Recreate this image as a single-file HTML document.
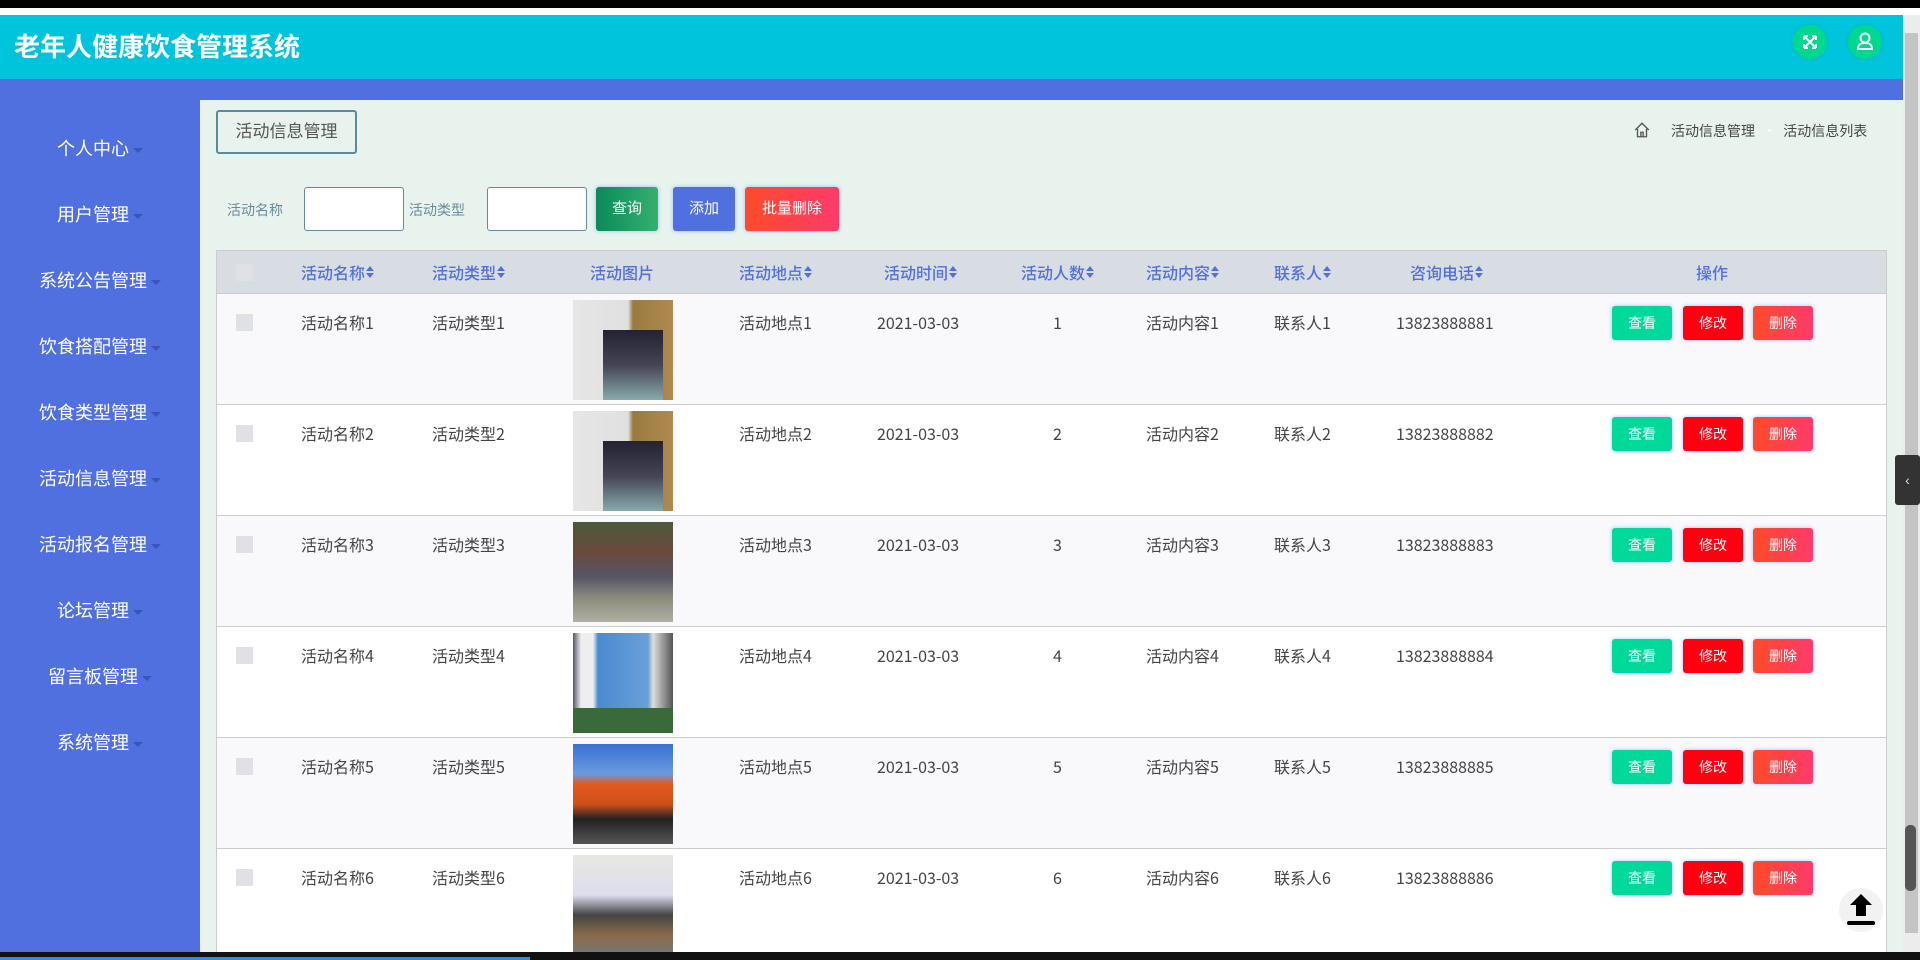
<!DOCTYPE html>
<html><head><meta charset="utf-8"><style>
*{box-sizing:border-box;margin:0;padding:0}
body{width:1920px;height:960px;overflow:hidden;position:relative;background:#e8f3ee;font-family:"Liberation Sans","Noto Sans CJK SC",sans-serif}
.abs{position:absolute}
.top{left:0;top:0;width:1920px;height:8px;background:#000}
.white{left:0;top:8px;width:1920px;height:7px;background:#fff}
.hdr{left:0;top:15px;width:1903px;height:64px;background:#00c4dc}
.hdr h1{position:absolute;left:14px;top:13px;font-size:26px;color:#fff;font-weight:bold;font-family:"Noto Sans CJK SC",sans-serif;line-height:36px}
.circ{position:absolute;width:34px;height:34px;border-radius:50%;background:#00d890;top:10px;box-shadow:0 0 4px rgba(0,0,0,.1)}
.bar{left:0;top:79px;width:1903px;height:21px;background:#5070e0}
.side{left:0;top:100px;width:200px;height:852px;background:#5070e0}
.side div{position:absolute;width:200px;text-align:center;color:#fff;font-size:18px;line-height:24px}
.side div:after{content:"";display:inline-block;margin-left:4px;vertical-align:middle;border-left:5px solid transparent;border-right:5px solid transparent;border-top:5px solid #3a55b8}
.sb{left:1903px;top:15px;width:17px;height:937px;background:#ececec}
.tbox{left:216px;top:110px;width:141px;height:44px;border:2px solid #5a8aa0;border-radius:3px;font-size:17px;color:#555;text-align:center;line-height:40px}
.bc{top:121px;font-size:14px;color:#444;font-family:"Noto Sans CJK SC",sans-serif;line-height:20px}
.lbl{top:200px;font-size:14px;color:#6a8a9a}
.inp{top:187px;width:100px;height:44px;background:#fff;border:1px solid #6a8a9a;border-radius:3px}
.btn{top:187px;height:44px;color:#fff;font-size:15px;text-align:center;line-height:44px;border-radius:3px;box-shadow:0 0 4px rgba(80,140,255,.5)}
.tbl{left:216px;top:250px;width:1671px;height:702px;background:#fff;border-left:1px solid #ccc;border-right:1px solid #ccc}
.th{position:absolute;left:0;top:0;width:100%;height:44px;background:#d8dde3;border-top:1px solid #ccc;border-bottom:1px solid #ccc}
.c{position:absolute;font-size:16px;color:#444;white-space:nowrap;font-family:"Noto Sans CJK SC",sans-serif;line-height:22px}
.th .c{color:#5070e0;top:10px;font-size:16px;font-weight:500}
.row{position:absolute;left:0;width:100%;height:111px;border-bottom:1px solid #ccc}
.row .c{top:17px}
.chk{position:absolute;left:19px;width:17px;height:17px;background:#dfe1e7}
.img{position:absolute;left:356px;top:6px;width:100px;height:100px}
.b{position:absolute;top:12px;height:34px;width:60px;color:#fff;font-size:14px;text-align:center;line-height:34px;border-radius:3px;box-shadow:0 0 4px rgba(80,140,255,.5)}
.ar{padding-right:9px}
.ar i{position:absolute;right:0;top:5px;width:0;height:0;border-left:4px solid transparent;border-right:4px solid transparent;border-bottom:5px solid #5070e0}
.ar b{position:absolute;right:0;top:12px;width:0;height:0;border-left:4px solid transparent;border-right:4px solid transparent;border-top:5px solid #5070e0}
</style></head><body>
<div class="abs top"></div><div class="abs white"></div>
<div class="abs hdr"><h1>老年人健康饮食管理系统</h1>
<div class="circ" style="left:1793px"><svg width="34" height="34" viewBox="0 0 34 34" stroke="#fff" stroke-width="2" fill="none"><path d="M11 11l12 12M23 11L11 23M11 11h4M11 11v4M23 11h-4M23 11v4M11 23h4M11 23v-4M23 23h-4M23 23v-4"/></svg></div>
<div class="circ" style="left:1848px"><svg width="34" height="34" viewBox="0 0 34 34" stroke="#fff" stroke-width="2" fill="none"><circle cx="17" cy="13" r="4.5"/><path d="M10 24c0-5 3-6 7-6s7 1 7 6z"/></svg></div>
</div>
<div class="abs bar"></div>
<div class="abs sb"><div style="position:absolute;left:2px;top:18px;width:13px;height:900px;background:#c4c4c4"></div><div style="position:absolute;left:2px;top:810px;width:11px;height:66px;background:#555;border-radius:5px"></div></div>
<div class="abs" style="left:1895px;top:455px;width:25px;height:50px;background:#333;border-radius:3px;color:#ddd;font-size:14px;text-align:center;line-height:50px">‹</div>
<div class="abs side">
<div style="top:37px">个人中心</div><div style="top:103px">用户管理</div><div style="top:169px">系统公告管理</div><div style="top:235px">饮食搭配管理</div><div style="top:301px">饮食类型管理</div><div style="top:367px">活动信息管理</div><div style="top:433px">活动报名管理</div><div style="top:499px">论坛管理</div><div style="top:565px">留言板管理</div><div style="top:631px">系统管理</div>
</div>
<div class="abs tbox">活动信息管理</div>
<div class="abs bc" style="left:1633px;top:121px"><svg width="18" height="18" viewBox="0 0 16 16" fill="none" stroke="#555" stroke-width="1.2"><path d="M2 8L8 2l6 6M4 7v7h8V7M7 14v-4h2v4"/></svg></div>
<div class="abs bc" style="left:1671px">活动信息管理 <span style="color:#fff;margin:0 4px">•</span> 活动信息列表</div>
<div class="abs lbl" style="left:227px">活动名称</div>
<div class="abs inp" style="left:304px"></div>
<div class="abs lbl" style="left:409px">活动类型</div>
<div class="abs inp" style="left:487px"></div>
<div class="abs btn" style="left:596px;width:62px;background:linear-gradient(90deg,#0b8a5a,#35b070)">查询</div>
<div class="abs btn" style="left:673px;width:62px;background:#5070e0">添加</div>
<div class="abs btn" style="left:745px;width:94px;background:linear-gradient(90deg,#ff4a2a,#ff3a6a)">批量删除</div>
<div class="abs tbl">
<div class="th"><div class="chk" style="top:13px"></div>
<div class="c ar" style="left:84px">活动名称<i></i><b></b></div><div class="c ar" style="left:215px">活动类型<i></i><b></b></div><div class="c" style="left:373px">活动图片</div><div class="c ar" style="left:522px">活动地点<i></i><b></b></div><div class="c ar" style="left:667px">活动时间<i></i><b></b></div><div class="c ar" style="left:804px">活动人数<i></i><b></b></div><div class="c ar" style="left:929px">活动内容<i></i><b></b></div><div class="c ar" style="left:1057px">联系人<i></i><b></b></div><div class="c ar" style="left:1193px">咨询电话<i></i><b></b></div><div class="c" style="left:1479px">操作</div></div>
<div class="row" style="top:44px;background:#f9f9fb"><div class="chk" style="top:20px"></div><div class="c" style="left:84px">活动名称1</div><div class="c" style="left:215px">活动类型1</div><div class="img" style="background:linear-gradient(90deg,#e6e6e6 0,#e0e0e0 55%,#9a7a40 60%,#b08a50 100%)"><div style="position:absolute;left:30px;top:30px;width:60px;height:70px;background:linear-gradient(#223 0,#445 50%,#8aa 100%)"></div></div><div class="c" style="left:522px">活动地点1</div><div class="c" style="left:660px">2021-03-03</div><div class="c" style="left:836px">1</div><div class="c" style="left:929px">活动内容1</div><div class="c" style="left:1057px">联系人1</div><div class="c" style="left:1179px">13823888881</div>
<div class="b" style="left:1395px;background:#00d99a">查看</div><div class="b" style="left:1466px;background:#ff0010">修改</div><div class="b" style="left:1536px;background:linear-gradient(90deg,#ff4a2a,#ff3a6a)">删除</div></div>
<div class="row" style="top:155px;background:#fff"><div class="chk" style="top:20px"></div><div class="c" style="left:84px">活动名称2</div><div class="c" style="left:215px">活动类型2</div><div class="img" style="background:linear-gradient(90deg,#e6e6e6 0,#e0e0e0 55%,#9a7a40 60%,#b08a50 100%)"><div style="position:absolute;left:30px;top:30px;width:60px;height:70px;background:linear-gradient(#223 0,#445 50%,#8aa 100%)"></div></div><div class="c" style="left:522px">活动地点2</div><div class="c" style="left:660px">2021-03-03</div><div class="c" style="left:836px">2</div><div class="c" style="left:929px">活动内容2</div><div class="c" style="left:1057px">联系人2</div><div class="c" style="left:1179px">13823888882</div>
<div class="b" style="left:1395px;background:#00d99a">查看</div><div class="b" style="left:1466px;background:#ff0010">修改</div><div class="b" style="left:1536px;background:linear-gradient(90deg,#ff4a2a,#ff3a6a)">删除</div></div>
<div class="row" style="top:266px;background:#f9f9fb"><div class="chk" style="top:20px"></div><div class="c" style="left:84px">活动名称3</div><div class="c" style="left:215px">活动类型3</div><div class="img" style="background:linear-gradient(#4a5a3a 0,#6a4a3a 30%,#556 55%,#8a8a7a 75%,#b0b0a0 100%)"></div><div class="c" style="left:522px">活动地点3</div><div class="c" style="left:660px">2021-03-03</div><div class="c" style="left:836px">3</div><div class="c" style="left:929px">活动内容3</div><div class="c" style="left:1057px">联系人3</div><div class="c" style="left:1179px">13823888883</div>
<div class="b" style="left:1395px;background:#00d99a">查看</div><div class="b" style="left:1466px;background:#ff0010">修改</div><div class="b" style="left:1536px;background:linear-gradient(90deg,#ff4a2a,#ff3a6a)">删除</div></div>
<div class="row" style="top:377px;background:#fff"><div class="chk" style="top:20px"></div><div class="c" style="left:84px">活动名称4</div><div class="c" style="left:215px">活动类型4</div><div class="img" style="background:linear-gradient(90deg,#556 0,#eee 8%,#eee 20%,#4a8ad0 25%,#6aa0d8 75%,#ddd 80%,#555 100%)"><div style="position:absolute;left:0;top:75px;width:100px;height:25px;background:#3a6a3a"></div></div><div class="c" style="left:522px">活动地点4</div><div class="c" style="left:660px">2021-03-03</div><div class="c" style="left:836px">4</div><div class="c" style="left:929px">活动内容4</div><div class="c" style="left:1057px">联系人4</div><div class="c" style="left:1179px">13823888884</div>
<div class="b" style="left:1395px;background:#00d99a">查看</div><div class="b" style="left:1466px;background:#ff0010">修改</div><div class="b" style="left:1536px;background:linear-gradient(90deg,#ff4a2a,#ff3a6a)">删除</div></div>
<div class="row" style="top:488px;background:#f9f9fb"><div class="chk" style="top:20px"></div><div class="c" style="left:84px">活动名称5</div><div class="c" style="left:215px">活动类型5</div><div class="img" style="background:linear-gradient(#3a70d0 0,#6a9ae0 30%,#e05a20 40%,#d0501a 60%,#222 75%,#555 100%)"></div><div class="c" style="left:522px">活动地点5</div><div class="c" style="left:660px">2021-03-03</div><div class="c" style="left:836px">5</div><div class="c" style="left:929px">活动内容5</div><div class="c" style="left:1057px">联系人5</div><div class="c" style="left:1179px">13823888885</div>
<div class="b" style="left:1395px;background:#00d99a">查看</div><div class="b" style="left:1466px;background:#ff0010">修改</div><div class="b" style="left:1536px;background:linear-gradient(90deg,#ff4a2a,#ff3a6a)">删除</div></div>
<div class="row" style="top:599px;background:#fff"><div class="chk" style="top:20px"></div><div class="c" style="left:84px">活动名称6</div><div class="c" style="left:215px">活动类型6</div><div class="img" style="background:linear-gradient(#e8e8e0 0,#dde 40%,#444 60%,#8a6a4a 80%,#777 100%)"></div><div class="c" style="left:522px">活动地点6</div><div class="c" style="left:660px">2021-03-03</div><div class="c" style="left:836px">6</div><div class="c" style="left:929px">活动内容6</div><div class="c" style="left:1057px">联系人6</div><div class="c" style="left:1179px">13823888886</div>
<div class="b" style="left:1395px;background:#00d99a">查看</div><div class="b" style="left:1466px;background:#ff0010">修改</div><div class="b" style="left:1536px;background:linear-gradient(90deg,#ff4a2a,#ff3a6a)">删除</div></div>
</div>
<div class="abs" style="left:1839px;top:888px;width:44px;height:44px;border-radius:50%;background:#f2f2f2"><svg width="44" height="44" viewBox="0 0 44 44"><path d="M22 6L33 17H27V28H17V17H11Z" fill="#000"/><rect x="8" y="33" width="28" height="4" rx="2" fill="#000"/></svg></div>
<div class="abs" style="left:0;top:952px;width:1920px;height:8px;background:#111"></div>
<div class="abs" style="left:0;top:957px;width:530px;height:3px;background:#1e90ff"></div>
</body></html>
